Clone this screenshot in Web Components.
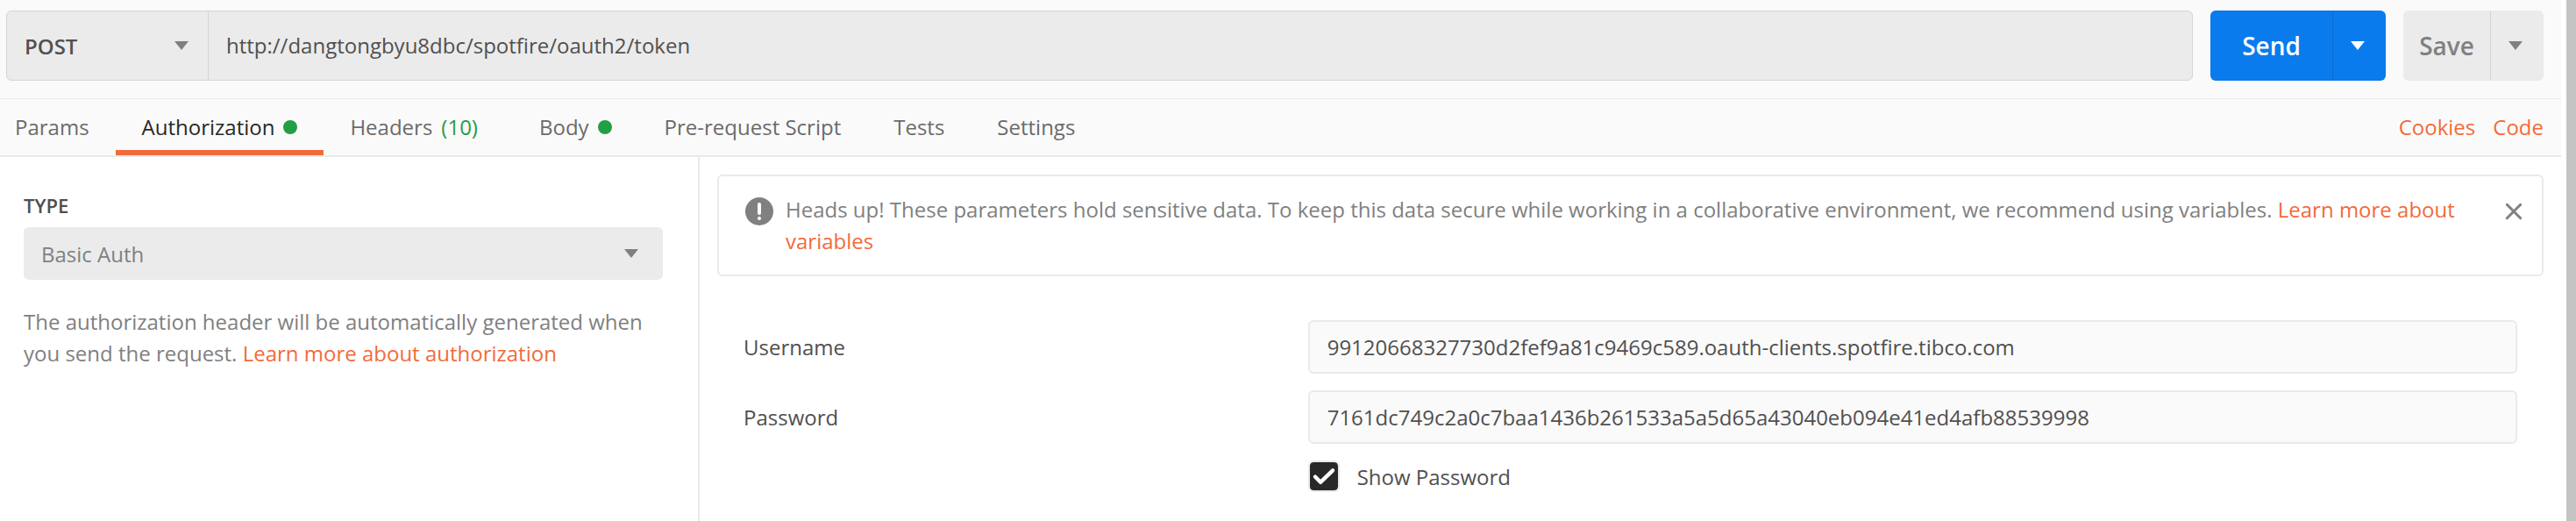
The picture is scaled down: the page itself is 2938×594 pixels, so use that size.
<!DOCTYPE html>
<html lang="en">
<head>
<meta charset="utf-8">
<title>Request editor</title>
<style>
  html, body { margin: 0; height: 100%; }
  body {
    --ink: #505050; --muted: #808080; --accent: #f26b3a; --line: #eaeaea;
    --fill: #ebebeb; --edge: #d4d4d4; --bar: #fafafa; --green: #249d47; --blue: #097bed;
    font: 24px/36px "Open Sans", "Noto Sans", sans-serif;
    color: var(--ink);
    background: #fff;
  }
</style>
</head>
<body>
<request-editor></request-editor>

<template id="request-editor">
  <style>
    :host { display: flex; min-height: 100%; background: #fff; }
    main { flex: 1; min-width: 0; display: flex; flex-direction: column; margin-right: 6px; }
    .rail { flex: none; width: 11px; background: #c4c4c4; }
    .columns { flex: 1; display: grid; grid-template-columns: 798fr 2123fr; }
  </style>
  <main>
    <request-bar></request-bar>
    <request-tabs></request-tabs>
    <div class="columns">
      <auth-type></auth-type>
      <auth-details></auth-details>
    </div>
  </main>
  <div class="rail"></div>
</template>

<template id="caret-icon">
  <style>
    :host { display: block; width: 16px; height: 10px; }
    svg { display: block; }
  </style>
  <svg width="16" height="10" viewBox="0 0 16 10" aria-hidden="true"><path d="M0 0h16L8 10z" fill="currentColor"/></svg>
</template>

<template id="drop-down">
  <style>
    :host { display: grid; align-items: center; }
    select, caret-icon { grid-area: 1 / 1; }
    select {
      appearance: none; width: 100%; height: 100%; margin: 0; border: 0; outline: 0; background: none;
      padding: 2px 48px 0 20px; font: inherit; color: inherit; cursor: pointer;
    }
    caret-icon { justify-self: end; margin-right: var(--caret-space, 28px); color: var(--muted); pointer-events: none; }
  </style>
  <select><option></option></select>
  <caret-icon></caret-icon>
</template>

<template id="request-bar">
  <style>
    :host { display: flex; gap: 20px; padding: 12px 20px 20px 7px; background: var(--bar); }
    .address {
      flex: 1; min-width: 0; display: flex; height: 80px; box-sizing: border-box;
      border: 1px solid var(--edge); border-radius: 6px; background: var(--fill);
    }
    drop-down { flex: none; width: 229px; border-right: 1px solid var(--edge); font-weight: 600; --caret-space: 22px; }
    input {
      flex: 1; min-width: 0; border: 0; outline: 0; padding: 0 20px; background: none;
      font: inherit; color: inherit;
    }
  </style>
  <div class="address">
    <drop-down label="Method" value="POST"></drop-down>
    <input type="text" aria-label="Request URL" value="http://dangtongbyu8dbc/spotfire/oauth2/token">
  </div>
  <split-button kind="primary" label="Send options">Send</split-button>
  <split-button label="Save options">Save</split-button>
</template>

<template id="split-button">
  <style>
    :host { display: flex; height: 80px; border-radius: 6px; overflow: hidden; background: var(--fill); color: var(--muted); --rule: var(--edge); --main: 99px; }
    :host([kind="primary"]) { background: var(--blue); color: #fff; --rule: #086ed4; --main: 139px; }
    button { border: 0; margin: 0; padding: 0; background: none; color: inherit; font: 600 28px/36px "Open Sans", sans-serif; cursor: pointer; }
    .main { min-width: var(--main); }
    .more { display: grid; place-items: center; width: 61px; padding-right: 4px; border-left: 1px solid var(--rule); }
  </style>
  <button class="main" type="button"><slot></slot></button>
  <button class="more" type="button"><caret-icon></caret-icon></button>
</template>

<template id="request-tabs">
  <style>
    :host { display: flex; justify-content: space-between; height: 64px; background: var(--bar); border-top: 1px solid var(--line); border-bottom: 2px solid var(--line); }
    [role="tablist"] { display: flex; margin-left: -13px; }
    nav { display: flex; align-items: center; gap: 20px; padding-right: 20px; }
    a { color: var(--accent); text-decoration: none; }
  </style>
  <div role="tablist">
    <tab-item>Params</tab-item>
    <tab-item active dot>Authorization</tab-item>
    <tab-item count="(10)">Headers</tab-item>
    <tab-item dot>Body</tab-item>
    <tab-item>Pre-request Script</tab-item>
    <tab-item>Tests</tab-item>
    <tab-item>Settings</tab-item>
  </div>
  <nav><a href="#cookies">Cookies</a><a href="#code">Code</a></nav>
</template>

<template id="tab-item">
  <style>
    :host { display: flex; color: #6b6b6b; }
    :host([active]) { color: #282828; }
    button {
      display: flex; align-items: center; gap: 10px; padding: 6px 30px 0; border: 0;
      border-bottom: 6px solid transparent; background: none; font: inherit; color: inherit; cursor: pointer;
    }
    :host([active]) button { border-bottom-color: var(--accent); }
    .dot { width: 16px; height: 16px; border-radius: 50%; background: var(--green); }
    .count { color: var(--green); margin-right: 10px; }
  </style>
  <button type="button" role="tab"><slot></slot></button>
</template>

<template id="auth-type">
  <style>
    :host { display: block; border-right: 2px solid var(--line); padding: 37px 40px 0 27px; }
    h2 { margin: 0 0 7px; font: 600 22px/36px "Open Sans", sans-serif; }
    drop-down { height: 60px; border-radius: 6px; background: var(--fill); color: var(--muted); }
    p { margin: 30px 0 0; color: var(--muted); }
    a { color: var(--accent); text-decoration: none; }
  </style>
  <h2>TYPE</h2>
  <drop-down label="Type" value="Basic Auth"></drop-down>
  <p>The authorization header will be automatically generated when you send the request. <a href="#authorization">Learn more about authorization</a></p>
</template>

<template id="auth-details">
  <style>
    :host { display: block; padding: 20px 20px 0; }
    a { color: var(--accent); text-decoration: none; }
    form { display: grid; gap: 19px; padding: 50px 30px 0; }
  </style>
  <notice-box>Heads up! These parameters hold sensitive data. To keep this data secure while working in a collaborative environment, we recommend using variables. <a href="#variables">Learn more about variables</a></notice-box>
  <form>
    <form-field label="Username" value="99120668327730d2fef9a81c9469c589.oauth-clients.spotfire.tibco.com"></form-field>
    <form-field label="Password" value="7161dc749c2a0c7baa1436b261533a5a5d65a43040eb094e41ed4afb88539998"></form-field>
    <check-field>Show Password</check-field>
  </form>
</template>

<template id="notice-box">
  <style>
    :host { display: flex; align-items: flex-start; border: 2px solid var(--line); border-radius: 6px; padding: 20px 23px 20px 30px; color: var(--muted); }
    .mark { flex: none; margin: 4px 14px 0 0; }
    p { flex: 1; margin: 0; }
    button { flex: none; display: block; margin: 11px 0 0 40px; padding: 0; border: 0; background: none; color: inherit; cursor: pointer; }
    svg { display: block; overflow: visible; }
  </style>
  <svg class="mark" width="32" height="32" viewBox="0 0 32 32" aria-hidden="true"><circle cx="16" cy="16" r="16" fill="currentColor"/><path d="M16 8v10" stroke="#fff" stroke-width="4" stroke-linecap="round"/><circle cx="16" cy="24" r="2" fill="#fff"/></svg>
  <p><slot></slot></p>
  <button type="button" aria-label="Dismiss"><svg width="18" height="18" viewBox="0 0 18 18"><path d="M1.3 1.3l15.4 15.4M16.7 1.3L1.3 16.7" stroke="currentColor" stroke-width="3" stroke-linecap="round"/></svg></button>
</template>

<template id="form-field">
  <style>
    :host { display: grid; grid-template-columns: 7fr 15fr; align-items: center; }
    input {
      box-sizing: border-box; width: 100%; height: 61px; padding: 0 20px; border: 2px solid var(--line); border-radius: 6px;
      outline: 0; background: var(--bar); font: inherit; color: inherit;
    }
  </style>
  <label for="field"></label>
  <input id="field" type="text">
</template>

<template id="check-field">
  <style>
    :host { display: grid; grid-template-columns: 7fr 15fr; line-height: 38px; }
    label { grid-column: 2; display: flex; align-items: flex-start; gap: 20px; }
    .box { display: grid; }
    input, svg { grid-area: 1 / 1; }
    input { appearance: none; box-sizing: border-box; width: 36px; height: 36px; margin: 0; border: 2px solid var(--line); border-radius: 6px; }
    input:checked { background: #282828 padding-box; }
    svg { pointer-events: none; }
  </style>
  <label><span class="box"><input type="checkbox" checked><svg width="36" height="36" viewBox="0 0 36 36" aria-hidden="true"><path d="M8 18.5l6 6.3L28 11.3" fill="none" stroke="#fff" stroke-width="4.4" stroke-linecap="round" stroke-linejoin="round"/></svg></span><slot></slot></label>
</template>

<script>
  class TemplateElement extends HTMLElement {
    constructor() {
      super();
      this.attachShadow({ mode: "open" }).append(
        document.getElementById(this.localName).content.cloneNode(true)
      );
    }
    find(selector) { return this.shadowRoot.querySelector(selector); }
  }

  class DropDown extends TemplateElement {
    connectedCallback() {
      this.find("select").setAttribute("aria-label", this.getAttribute("label"));
      this.find("option").textContent = this.getAttribute("value");
    }
  }

  class SplitButton extends TemplateElement {
    connectedCallback() {
      this.find(".more").setAttribute("aria-label", this.getAttribute("label"));
    }
  }

  class TabItem extends TemplateElement {
    connectedCallback() {
      const button = this.find("button");
      button.setAttribute("aria-selected", this.hasAttribute("active"));
      if (this.hasAttribute("dot")) this.addMark(button, "dot", "");
      if (this.hasAttribute("count")) this.addMark(button, "count", this.getAttribute("count"));
    }
    addMark(button, name, text) {
      const mark = document.createElement("span");
      mark.className = name;
      mark.textContent = text;
      button.append(mark);
    }
  }

  class FormField extends TemplateElement {
    connectedCallback() {
      this.find("label").textContent = this.getAttribute("label");
      this.find("input").value = this.getAttribute("value");
    }
  }

  customElements.define("caret-icon", class extends TemplateElement {});
  customElements.define("drop-down", DropDown);
  customElements.define("split-button", SplitButton);
  customElements.define("tab-item", TabItem);
  customElements.define("form-field", FormField);
  customElements.define("check-field", class extends TemplateElement {});
  customElements.define("notice-box", class extends TemplateElement {});
  customElements.define("request-bar", class extends TemplateElement {});
  customElements.define("request-tabs", class extends TemplateElement {});
  customElements.define("auth-type", class extends TemplateElement {});
  customElements.define("auth-details", class extends TemplateElement {});
  customElements.define("request-editor", class extends TemplateElement {});
</script>
</body>
</html>
